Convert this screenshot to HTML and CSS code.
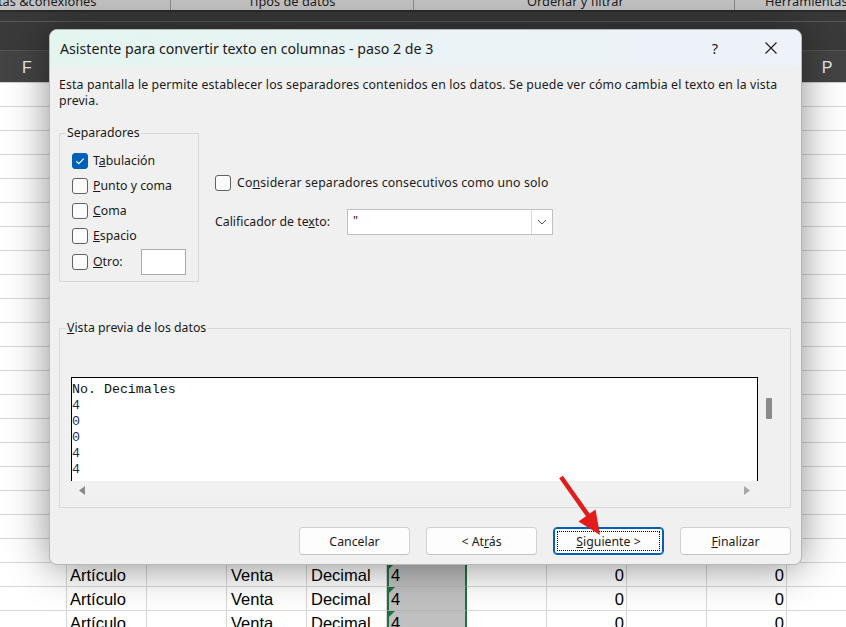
FILE: index.html
```html
<!DOCTYPE html>
<html lang="es">
<head>
<meta charset="utf-8">
<title>Asistente para convertir texto en columnas</title>
<link rel="stylesheet" href="styles.css">
</head>
<body>
<div class="app">
  <div class="ribbon">
    <div class="rgroup g1"><span>tas &amp;conexiones</span></div>
    <div class="rgroup g2"><span>Tipos de datos</span></div>
    <div class="rgroup g3"><span>Ordenar y filtrar</span></div>
    <div class="rgroup g4"><span>Herramientas</span></div>
  </div>
  <div class="band"></div>
  <div class="colheads">
    <span>F</span><span>G</span><span>H</span><span>I</span><span>J</span><span>K</span><span>L</span><span>M</span><span>N</span><span>O</span><span>P</span>
  </div>
  <div class="sheet">
    <div class="row"><span></span><span></span><span></span><span></span><span></span><span class="sel"></span><span></span><span></span><span></span><span></span><span></span></div>
    <div class="row"><span></span><span></span><span></span><span></span><span></span><span class="sel"></span><span></span><span></span><span></span><span></span><span></span></div>
    <div class="row"><span></span><span></span><span></span><span></span><span></span><span class="sel"></span><span></span><span></span><span></span><span></span><span></span></div>
    <div class="row"><span></span><span></span><span></span><span></span><span></span><span class="sel"></span><span></span><span></span><span></span><span></span><span></span></div>
    <div class="row"><span></span><span></span><span></span><span></span><span></span><span class="sel"></span><span></span><span></span><span></span><span></span><span></span></div>
    <div class="row"><span></span><span></span><span></span><span></span><span></span><span class="sel"></span><span></span><span></span><span></span><span></span><span></span></div>
    <div class="row"><span></span><span></span><span></span><span></span><span></span><span class="sel"></span><span></span><span></span><span></span><span></span><span></span></div>
    <div class="row"><span></span><span></span><span></span><span></span><span></span><span class="sel"></span><span></span><span></span><span></span><span></span><span></span></div>
    <div class="row"><span></span><span></span><span></span><span></span><span></span><span class="sel"></span><span></span><span></span><span></span><span></span><span></span></div>
    <div class="row"><span></span><span></span><span></span><span></span><span></span><span class="sel"></span><span></span><span></span><span></span><span></span><span></span></div>
    <div class="row"><span></span><span></span><span></span><span></span><span></span><span class="sel"></span><span></span><span></span><span></span><span></span><span></span></div>
    <div class="row"><span></span><span></span><span></span><span></span><span></span><span class="sel"></span><span></span><span></span><span></span><span></span><span></span></div>
    <div class="row"><span></span><span></span><span></span><span></span><span></span><span class="sel"></span><span></span><span></span><span></span><span></span><span></span></div>
    <div class="row"><span></span><span></span><span></span><span></span><span></span><span class="sel"></span><span></span><span></span><span></span><span></span><span></span></div>
    <div class="row"><span></span><span></span><span></span><span></span><span></span><span class="sel"></span><span></span><span></span><span></span><span></span><span></span></div>
    <div class="row"><span></span><span></span><span></span><span></span><span></span><span class="sel"></span><span></span><span></span><span></span><span></span><span></span></div>
    <div class="row"><span></span><span></span><span></span><span></span><span></span><span class="sel"></span><span></span><span></span><span></span><span></span><span></span></div>
    <div class="row"><span></span><span></span><span></span><span></span><span></span><span class="sel"></span><span></span><span></span><span></span><span></span><span></span></div>
    <div class="row"><span></span><span></span><span></span><span></span><span></span><span class="sel"></span><span></span><span></span><span></span><span></span><span></span></div>
    <div class="row"><span></span><span></span><span></span><span></span><span></span><span class="sel"></span><span></span><span></span><span></span><span></span><span></span></div>
    <div class="row"><span></span><span>Artículo</span><span></span><span>Venta</span><span>Decimal</span><span class="sel err">4</span><span></span><span class="num">0</span><span></span><span class="num">0</span><span></span></div>
    <div class="row"><span></span><span>Artículo</span><span></span><span>Venta</span><span>Decimal</span><span class="sel err">4</span><span></span><span class="num">0</span><span></span><span class="num">0</span><span></span></div>
    <div class="row"><span></span><span>Artículo</span><span></span><span>Venta</span><span>Decimal</span><span class="sel err">4</span><span></span><span class="num">0</span><span></span><span class="num">0</span><span></span></div>
  </div>
</div>

<div class="dialog" role="dialog">
  <div class="titlebar">
    <span class="title">Asistente para convertir texto en columnas - paso 2 de 3</span>
    <span class="help">?</span>
    <span class="close"><svg width="12" height="12" viewBox="0 0 12 12"><path d="M0.5 0.5 L11.5 11.5 M11.5 0.5 L0.5 11.5" stroke="#1a1a1a" stroke-width="1.1" fill="none"/></svg></span>
  </div>
  <div class="dbody">
    <p class="desc">Esta pantalla le permite establecer los separadores contenidos en los datos. Se puede ver cómo cambia el texto en la vista<br>previa.</p>
    <div class="top">
      <fieldset class="seps">
        <legend>Separadores</legend>
        <label class="chk"><span class="box checked"><svg width="16" height="16" viewBox="0 0 16 16"><path d="M4.3 8.3 L6.8 10.7 L11.8 5.6" stroke="#fff" stroke-width="1.2" fill="none"/></svg></span><span>T<u>a</u>bulación</span></label>
        <label class="chk"><span class="box"></span><span><u>P</u>unto y coma</span></label>
        <label class="chk"><span class="box"></span><span><u>C</u>oma</span></label>
        <label class="chk"><span class="box"></span><span><u>E</u>spacio</span></label>
        <label class="chk otro"><span class="box"></span><span><u>O</u>tro:</span><span class="otro-input"></span></label>
      </fieldset>
      <div class="opts">
        <label class="chk"><span class="box"></span><span class="wide">Co<u>n</u>siderar separadores consecutivos como uno solo</span></label>
        <div class="qual">
          <span class="qlabel">Calificador de te<u>x</u>to:</span>
          <div class="combo"><span class="val">"</span><span class="drop"><svg width="10" height="6" viewBox="0 0 10 6"><path d="M1 1 L5 5 L9 1" stroke="#5a5a5a" stroke-width="1" fill="none"/></svg></span></div>
        </div>
      </div>
    </div>
    <fieldset class="preview">
      <legend><u>V</u>ista previa de los datos</legend>
      <div class="pv">
        <div class="pvbox"><pre class="pvtext"><span class="hdr">No. Decimales</span>
<span class="d">4</span>
<span class="d">0</span>
<span class="d">0</span>
<span class="d">4</span>
<span class="d">4</span></pre></div>
        <div class="vscroll"><span class="thumb"></span></div>
      </div>
      <div class="hscroll">
        <svg width="6" height="9" viewBox="0 0 6 9"><path d="M6 0 L0 4.5 L6 9 Z" fill="#8a8a8a"/></svg>
        <svg width="6" height="9" viewBox="0 0 6 9"><path d="M0 0 L6 4.5 L0 9 Z" fill="#a8a8a8"/></svg>
      </div>
    </fieldset>
    <div class="buttons">
      <button class="btn">Cancelar</button>
      <button class="btn">&lt; At<u>r</u>ás</button>
      <button class="btn primary"><u>S</u>iguiente &gt;</button>
      <button class="btn"><u>F</u>inalizar</button>
    </div>
  </div>
</div>

<svg class="arrow" width="846" height="627" viewBox="0 0 846 627">
  <line x1="561" y1="477" x2="590" y2="518" stroke="#e31b1b" stroke-width="4.5"/>
  <path d="M600 535 L578.5 521.5 L595.5 509.5 Z" fill="#e31b1b"/>
</svg>
</body>
</html>
```

FILE: styles.css
```css
* { box-sizing: border-box; }
html, body { margin: 0; padding: 0; }
body {
  width: 846px;
  height: 627px;
  overflow: hidden;
  position: relative;
  background: #ffffff;
  font-family: "Noto Sans", "DejaVu Sans", sans-serif;
  color: #1a1a1a;
}

/* ---------- background spreadsheet ---------- */
.app { display: flex; flex-direction: column; height: 627px; }

.ribbon {
  height: 10px;
  flex: none;
  display: flex;
  overflow: hidden;
  background: #c5c5c5;
  font-size: 12.8px;
  line-height: 13px;
  color: #1e1e1e;
}
.rgroup { flex: none; }
.rgroup span { display: block; margin-top: -5.5px; white-space: nowrap; }
.g1 { width: 170px; }
.g1 span { margin-left: -2px; }
.g2 { width: 243px; padding-left: 77px; border-left: 1px solid #8c8c8c; }
.g3 { width: 321px; padding-left: 113px; border-left: 1px solid #8c8c8c; }
.g4 { flex: 1; padding-left: 30px; border-left: 1px solid #8c8c8c; }

.band {
  height: 40px;
  flex: none;
  background: linear-gradient(#242424 0, #393939 3px, #393939 11px, #5a5a5a 11px, #5a5a5a 12px, #3a3a3a 12px);
}

.colheads {
  flex: none;
  height: 33px;
  margin-left: -13px;
  display: grid;
  grid-template-columns: repeat(11, 80px);
  background: #444444;
  border-top: 1px solid #525252;
  border-bottom: 1px solid #cfcfcf;
  color: #ececec;
  font-family: "Liberation Sans", Arial, sans-serif;
  font-size: 16px;
}
.colheads span { text-align: center; padding-top: 8px; }

.sheet { flex: none; }
.row {
  display: grid;
  grid-template-columns: repeat(11, 80px);
  height: 24px;
  margin-left: -13px;
}
.row > span {
  position: relative;
  border-right: 1px solid #d6d6d6;
  border-bottom: 1px solid #d6d6d6;
  font-family: "Liberation Sans", Arial, sans-serif;
  font-size: 16.5px;
  line-height: 25px;
  padding: 0 3px;
  white-space: nowrap;
  overflow: hidden;
  color: #000;
}
.row > span:nth-child(4), .row > span:nth-child(5) { padding-left: 4px; }
.row > .num { text-align: right; padding-right: 2px; }
.row > .sel {
  background: #c0c0c0;
  border-left: 2px solid #1e7145;
  border-right: 2px solid #1e7145;
  border-bottom-color: #b4b4b4;
  padding-left: 2px;
}
.row > .err::before {
  content: "";
  position: absolute;
  left: 0;
  top: 0;
  border-top: 6px solid #1e7145;
  border-right: 6px solid transparent;
}

/* ---------- dialog ---------- */
.dialog {
  position: absolute;
  left: 49px;
  top: 29px;
  width: 753px;
  height: 536px;
  z-index: 2;
  background: #f0f0f0;
  border: 1px solid #b8b8b8;
  border-radius: 8px;
  box-shadow: 0 2px 42px rgba(0, 0, 0, 0.45);
  display: flex;
  flex-direction: column;
  overflow: hidden;
}

.titlebar {
  height: 36px;
  flex: none;
  display: flex;
  align-items: center;
  padding-left: 10px;
  padding-right: 15px;
  background: linear-gradient(90deg, #e4f5f0 0%, #e9f3f5 45%, #eef2f9 100%);
}
.title { flex: 1; font-size: 14.2px; color: #1a1a1a; white-space: nowrap; }
.help { width: 30px; text-align: center; font-size: 14.5px; color: #1a1a1a; margin-right: 26px; }
.close { width: 30px; display: flex; justify-content: center; align-items: center; }
.close svg { display: block; }

.dbody {
  flex: 1;
  padding: 11px 10px 0 9px;
  font-size: 12.3px;
  line-height: 16px;
  color: #1a1a1a;
  display: flex;
  flex-direction: column;
}
.desc { margin: 0; white-space: nowrap; letter-spacing: 0.13px; }

.top { display: flex; align-items: flex-start; gap: 16px; margin-top: 16px; }

fieldset {
  margin: 0;
  min-width: 0;
  border: 1px solid #d9d9d9;
  border-radius: 0;
}
legend { padding: 0 1px; line-height: 16px; }

.seps {
  width: 140px;
  flex: none;
  padding: 7px 12px 6px 12px;
}
.seps legend { margin-left: -6px; }

.chk { display: flex; align-items: center; gap: 5px; height: 25px; white-space: nowrap; }
.box {
  width: 16px;
  height: 16px;
  flex: none;
  border: 1px solid #616161;
  border-radius: 3px;
  background: #fbfbfb;
}
.box.checked { background: #005fb8; border-color: #005fb8; }
.box.checked svg { display: block; margin: -1px; }
.chk.otro { height: 27px; }
.otro-input {
  margin-left: auto;
  width: 45px;
  height: 26px;
  background: #ffffff;
  border: 1px solid #a9a9a9;
}

.opts { padding-top: 49px; display: flex; flex-direction: column; }
.opts .chk { height: 18px; gap: 6px; }
.wide { letter-spacing: 0.15px; }
.qual { display: flex; align-items: center; margin-top: 17px; height: 26px; }
.qlabel { width: 132px; flex: none; white-space: nowrap; }
.combo {
  width: 206px;
  height: 26px;
  display: flex;
  background: #ffffff;
  border: 1px solid #c0c0c0;
}
.val { flex: 1; padding-left: 5px; line-height: 22px; }
.drop {
  width: 21px;
  border-left: 1px solid #dadada;
  display: flex;
  align-items: center;
  justify-content: center;
}

.preview {
  margin-top: 38px;
  padding: 41px 8px 8px 11px;
}
.preview legend { margin-left: -5px; }
.pv { display: flex; }
.pvbox {
  width: 687px;
  height: 104px;
  background: #ffffff;
  border: 1px solid #000000;
  border-bottom: none;
  overflow: hidden;
}
.pvtext {
  margin: 0;
  padding: 4px 0 0 0;
  font-family: "Liberation Mono", "Courier New", monospace;
  font-size: 13.3px;
  line-height: 16px;
}
.pvtext .hdr { color: #111111; }
.pvtext .d { color: #1f2a5c; }
.vscroll { width: 24px; position: relative; }
.thumb {
  position: absolute;
  left: 8px;
  top: 21px;
  width: 6px;
  height: 21px;
  background: #8a8a8a;
  border-radius: 1px;
}
.hscroll {
  width: 687px;
  height: 18px;
  display: flex;
  align-items: center;
  justify-content: space-between;
  padding: 0 8px 0 8px;
  background: #f1f1f1;
}
.hscroll svg { display: block; }

.buttons {
  display: flex;
  justify-content: flex-end;
  gap: 16px;
  margin-top: 19px;
}
.btn {
  position: relative;
  width: 111px;
  height: 28px;
  padding: 0;
  font-family: inherit;
  font-size: 12.3px;
  color: #1a1a1a;
  background: #fdfdfd;
  border: 1px solid #d0d0d0;
  border-bottom-color: #c2c2c2;
  border-radius: 4px;
}
.btn.primary { border: 1px solid #005fb8; box-shadow: inset 0 0 0 1px #005fb8; }
.btn.primary::after {
  content: "";
  position: absolute;
  inset: 3px;
  border: 1px dotted #000;
}

.arrow { position: absolute; left: 0; top: 0; z-index: 3; pointer-events: none; }
```
